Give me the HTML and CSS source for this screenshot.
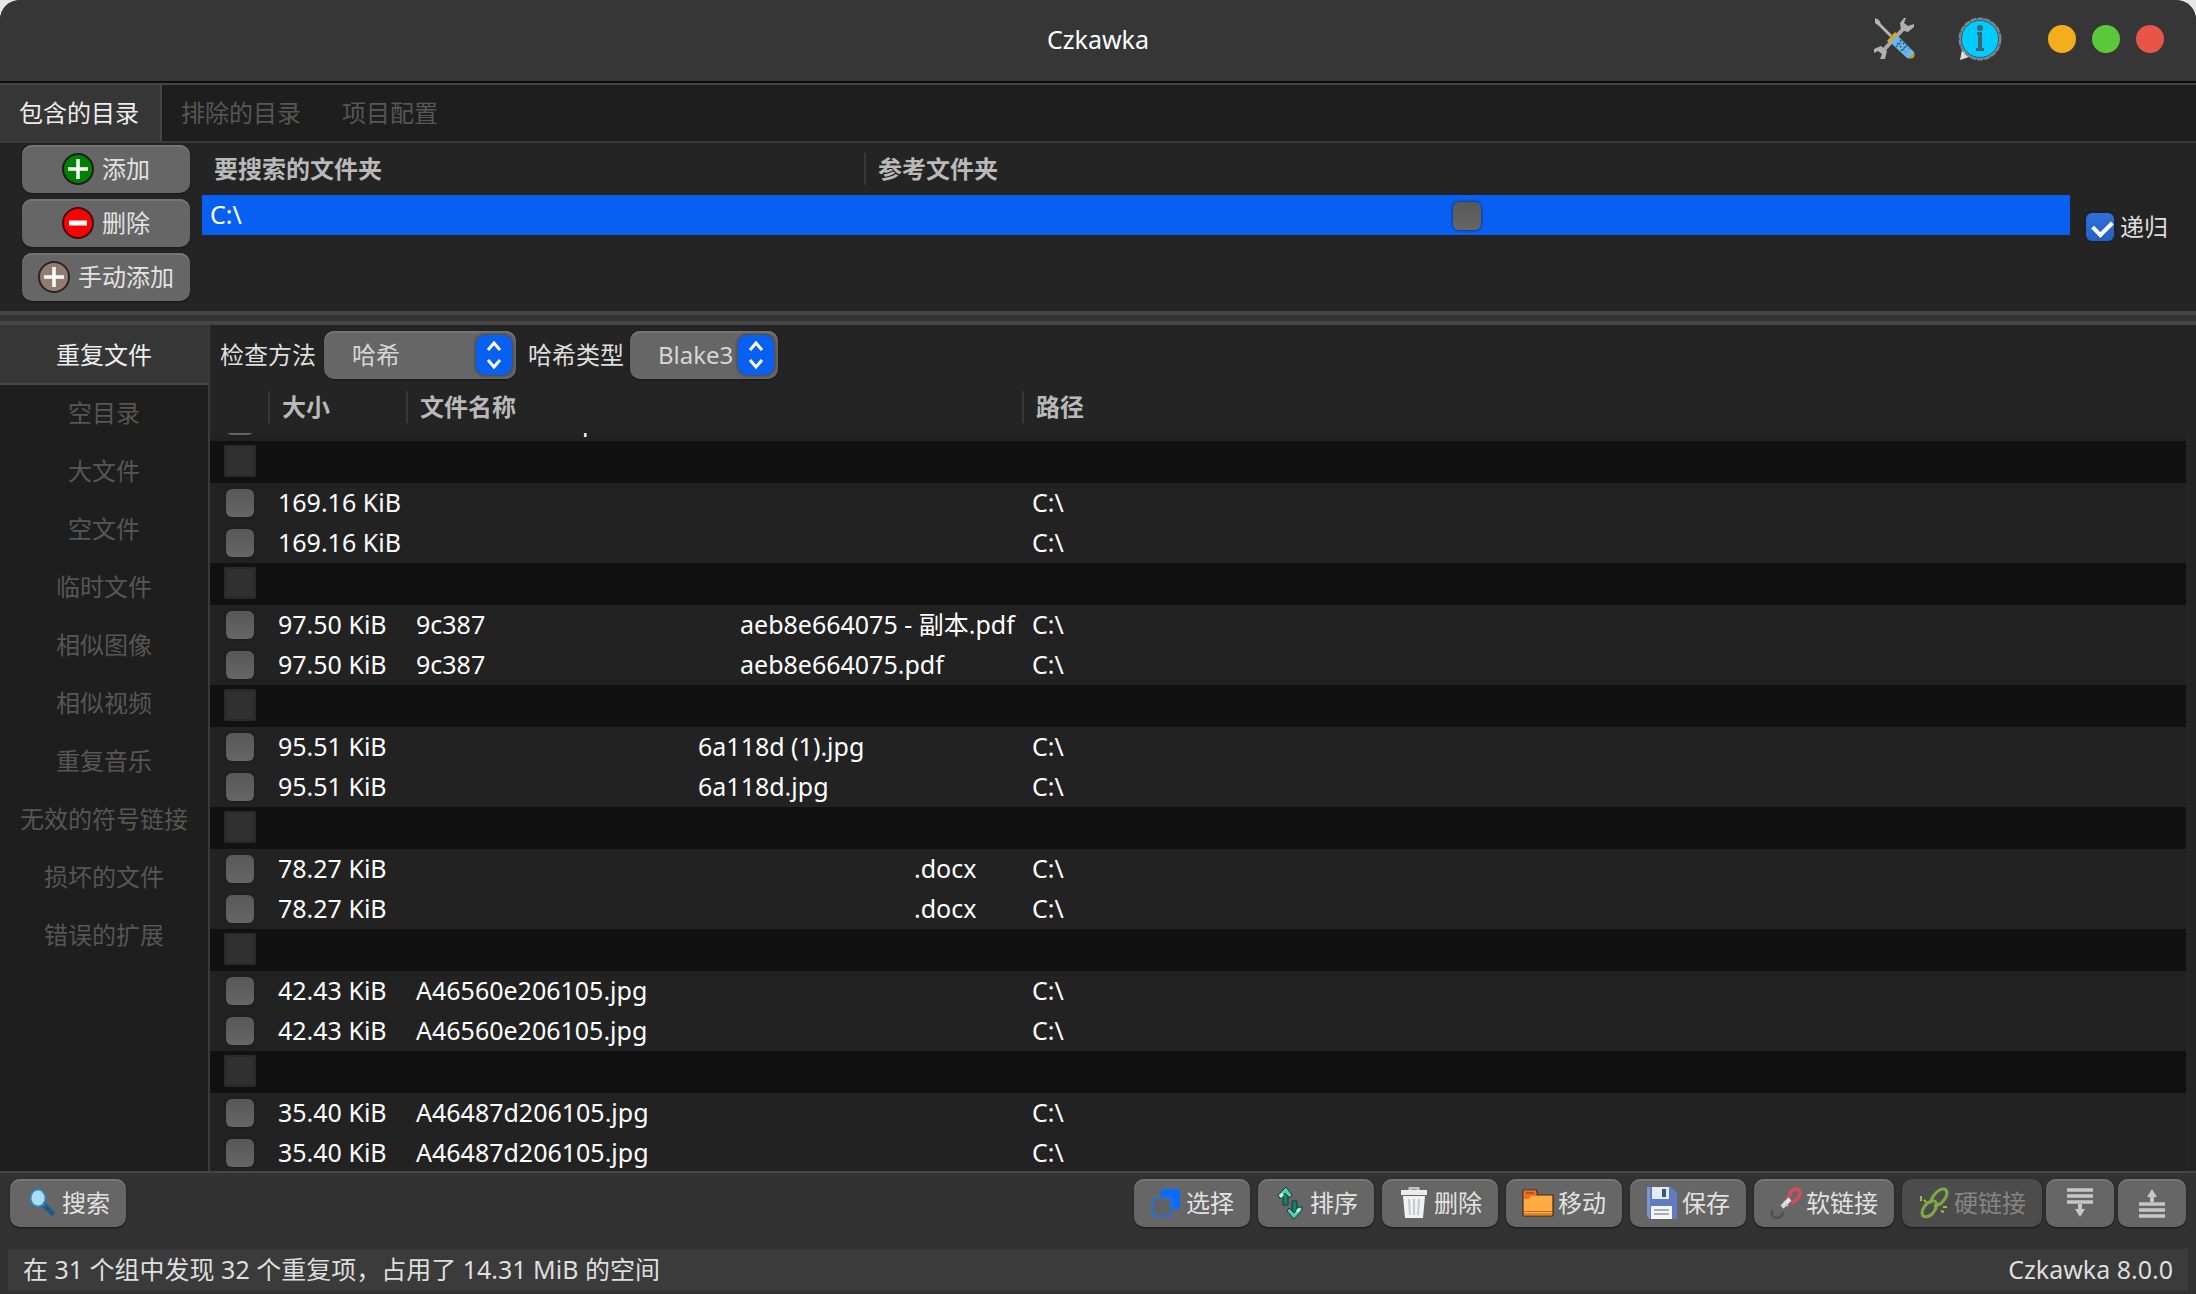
FILE: index.html
```html
<!DOCTYPE html>
<html lang="zh-CN">
<head>
<meta charset="utf-8">
<title>Czkawka</title>
<link rel="stylesheet" href="styles.css">
</head>
<body>
<div class="window">
  <header class="titlebar">
    <h1 class="title latin">Czkawka</h1>
    <div class="title-actions">
      <button class="icon-button" aria-label="设置">
        <svg width="44" height="44" viewBox="0 0 44 44">
          <path d="M9 36 L33 10" stroke="#a9a9a9" stroke-width="4"/>
          <path d="M2 32l7-3 6 5-2 8-5 0 2-5-4-3-4 2z" fill="#b0b0b0"/>
          <path d="M32 1l-4 5 1 7 7 2 6-5v-3l-6 2-4-3 2-5z" fill="#b0b0b0"/>
          <path d="M3 1l4 2 2 4 11 11-2 2L7 9 3 6z" fill="#b5b5b5"/>
          <path d="M15 24l8-9 3 3-8 8z" fill="#e0a818"/>
          <path d="M20 23c2-4 5-5 8-2l14 14c2 3-4 8-7 6L22 29c-2-2-3-4-2-6z" fill="#6db7e6"/>
          <path d="M37 41l5-5c2 3-1 7-5 5z" fill="#c9971c"/>
          <path d="M25 26l9 9M28 23l9 9M24 30l6-6M29 34l6-6" stroke="#245f8c" stroke-width="1.500" stroke-dasharray="2 2"/>
        </svg>
      </button>
      <button class="icon-button" aria-label="关于">
        <svg width="44" height="44" viewBox="0 0 44 44">
          <path d="M4 33l-2 10 12-4z" fill="#dcdce6"/>
          <circle cx="22" cy="22" r="20" fill="#00ccff" stroke="#7d8386" stroke-width="3" stroke-dasharray="6 1"/>
          <circle cx="22" cy="22" r="18.500" fill="none" stroke="#2e5f70" stroke-width="1"/>
          <circle cx="22" cy="11" r="3" fill="#3f6472"/>
          <path d="M19 15h5v16h2v3h-8v-3h2V18h-1z" fill="#3f6472"/>
        </svg>
      </button>
      <div class="window-buttons">
        <button class="dot dot-min" aria-label="最小化"></button>
        <button class="dot dot-max" aria-label="最大化"></button>
        <button class="dot dot-close" aria-label="关闭"></button>
      </div>
    </div>
  </header>

  <nav class="top-tabs">
    <button class="top-tab active">包含的目录</button>
    <button class="top-tab">排除的目录</button>
    <button class="top-tab">项目配置</button>
  </nav>

  <section class="folders">
    <div class="folder-buttons">
      <button class="button wide">
        <svg width="32" height="32" viewBox="0 0 32 32"><circle cx="16" cy="16" r="15" fill="#008000" stroke="#1c1c1c" stroke-width="2"/><path d="M16 6v20M6 16h20" stroke="#fff" stroke-width="3.500"/></svg>
        <span>添加</span>
      </button>
      <button class="button wide">
        <svg width="32" height="32" viewBox="0 0 32 32"><circle cx="16" cy="16" r="15" fill="#f00" stroke="#3a1010" stroke-width="2"/><path d="M7 16h18" stroke="#fff" stroke-width="5"/></svg>
        <span>删除</span>
      </button>
      <button class="button wide">
        <svg width="32" height="32" viewBox="0 0 32 32"><circle cx="16" cy="16" r="15" fill="#917c6f" stroke="#2b2420" stroke-width="2"/><path d="M16 6v20M6 16h20" stroke="#fff" stroke-width="3.500"/></svg>
        <span>手动添加</span>
      </button>
    </div>
    <table class="folder-table">
      <colgroup><col class="col-folder"><col></colgroup>
      <thead><tr><th><span>要搜索的文件夹</span></th><th class="ruled"><span>参考文件夹</span></th></tr></thead>
      <tbody><tr><td class="latin">C:\</td><td class="center"><input type="checkbox" class="check" aria-label="参考文件夹"></td></tr></tbody>
    </table>
    <label class="recursive"><input type="checkbox" class="check" checked><span>递归</span></label>
  </section>

  <div class="splitter"></div>

  <main class="main">
    <nav class="side-tabs">
      <button class="side-tab active">重复文件</button>
      <button class="side-tab">空目录</button>
      <button class="side-tab">大文件</button>
      <button class="side-tab">空文件</button>
      <button class="side-tab">临时文件</button>
      <button class="side-tab">相似图像</button>
      <button class="side-tab">相似视频</button>
      <button class="side-tab">重复音乐</button>
      <button class="side-tab">无效的符号链接</button>
      <button class="side-tab">损坏的文件</button>
      <button class="side-tab">错误的扩展</button>
    </nav>
    <section class="results">
      <div class="options">
        <label for="method">检查方法</label>
        <div class="combo combo-method">
          <select id="method"><option>哈希</option></select>
          <span class="combo-arrow"><svg width="16" height="28" viewBox="0 0 16 28"><path d="M2 9l6-7 6 7M2 19l6 7 6-7" fill="none" stroke="#fff" stroke-width="3"/></svg></span>
        </div>
        <label for="hash-type">哈希类型</label>
        <div class="combo combo-hash">
          <select id="hash-type"><option>Blake3</option></select>
          <span class="combo-arrow"><svg width="16" height="28" viewBox="0 0 16 28"><path d="M2 9l6-7 6 7M2 19l6 7 6-7" fill="none" stroke="#fff" stroke-width="3"/></svg></span>
        </div>
      </div>
      <div class="result-scroll">
        <table class="result-table">
          <colgroup><col class="col-check"><col class="col-size"><col class="col-name"><col></colgroup>
          <thead><tr><th></th><th class="ruled"><span>大小</span></th><th class="ruled"><span>文件名称</span></th><th class="ruled"><span>路径</span></th></tr></thead>
          <tbody>
            <tr class="peek"><td><div class="peek-clip"><input type="checkbox" class="check" aria-label="选择"></div></td><td></td><td><div class="peek-clip"><span class="at-p">p</span></div></td><td></td></tr>
            <tr class="group"><td><input type="checkbox" class="check" disabled aria-label="组"></td><td></td><td></td><td></td></tr>
            <tr><td><input type="checkbox" class="check" aria-label="选择"></td><td>169.16 KiB</td><td></td><td>C:\</td></tr>
            <tr><td><input type="checkbox" class="check" aria-label="选择"></td><td>169.16 KiB</td><td></td><td>C:\</td></tr>
            <tr class="group"><td><input type="checkbox" class="check" disabled aria-label="组"></td><td></td><td></td><td></td></tr>
            <tr><td><input type="checkbox" class="check" aria-label="选择"></td><td>97.50 KiB</td><td><span class="split-name"><span>9c387</span><span>aeb8e664075 - 副本.pdf</span></span></td><td>C:\</td></tr>
            <tr><td><input type="checkbox" class="check" aria-label="选择"></td><td>97.50 KiB</td><td><span class="split-name"><span>9c387</span><span>aeb8e664075.pdf</span></span></td><td>C:\</td></tr>
            <tr class="group"><td><input type="checkbox" class="check" disabled aria-label="组"></td><td></td><td></td><td></td></tr>
            <tr><td><input type="checkbox" class="check" aria-label="选择"></td><td>95.51 KiB</td><td><span class="tail-jpg">6a118d (1).jpg</span></td><td>C:\</td></tr>
            <tr><td><input type="checkbox" class="check" aria-label="选择"></td><td>95.51 KiB</td><td><span class="tail-jpg">6a118d.jpg</span></td><td>C:\</td></tr>
            <tr class="group"><td><input type="checkbox" class="check" disabled aria-label="组"></td><td></td><td></td><td></td></tr>
            <tr><td><input type="checkbox" class="check" aria-label="选择"></td><td>78.27 KiB</td><td><span class="tail-docx">.docx</span></td><td>C:\</td></tr>
            <tr><td><input type="checkbox" class="check" aria-label="选择"></td><td>78.27 KiB</td><td><span class="tail-docx">.docx</span></td><td>C:\</td></tr>
            <tr class="group"><td><input type="checkbox" class="check" disabled aria-label="组"></td><td></td><td></td><td></td></tr>
            <tr><td><input type="checkbox" class="check" aria-label="选择"></td><td>42.43 KiB</td><td>A46560e206105.jpg</td><td>C:\</td></tr>
            <tr><td><input type="checkbox" class="check" aria-label="选择"></td><td>42.43 KiB</td><td>A46560e206105.jpg</td><td>C:\</td></tr>
            <tr class="group"><td><input type="checkbox" class="check" disabled aria-label="组"></td><td></td><td></td><td></td></tr>
            <tr><td><input type="checkbox" class="check" aria-label="选择"></td><td>35.40 KiB</td><td>A46487d206105.jpg</td><td>C:\</td></tr>
            <tr><td><input type="checkbox" class="check" aria-label="选择"></td><td>35.40 KiB</td><td>A46487d206105.jpg</td><td>C:\</td></tr>
          </tbody>
        </table>
      </div>
    </section>
  </main>

  <footer class="bottom">
    <div class="actions">
      <button class="button">
        <svg width="32" height="32" viewBox="0 0 32 32"><path d="M17 17l9 9" stroke="#1c5a8a" stroke-width="5" stroke-linecap="round"/><path d="M14 15l5 4" stroke="#2b79b5" stroke-width="3"/><ellipse cx="12" cy="11" rx="8" ry="9" fill="#2f8fd0"/><ellipse cx="12" cy="11" rx="6.500" ry="7.500" fill="#a9defa"/></svg>
        <span>搜索</span>
      </button>
      <div class="action-group">
        <button class="button">
          <svg width="32" height="32" viewBox="0 0 32 32"><rect x="11" y="2" width="19" height="20" rx="2" fill="#0a6cff"/><rect x="3" y="11" width="18" height="18" rx="3" fill="#626262" stroke="#2e6fc4" stroke-width="2.500"/></svg>
          <span>选择</span>
        </button>
        <button class="button">
          <svg width="32" height="32" viewBox="0 0 32 32"><path d="M9 6h5v12H9z" fill="#1d7d6c" stroke="#123c36"/><path d="M18 14h5v12h-5z" fill="#1d7d6c" stroke="#123c36"/><path d="M4 8l8-8 6 8-2 3-5-5-5 6z" fill="#4fd0b4" stroke="#123c36"/><path d="M28 23l-8 9-7-8 2-3 5 5 5-6 3 0z" fill="#4fd0b4" stroke="#123c36"/><path d="M5 8l3-2 2 2-3 3zM27 22l-3-1-2 3 2 2z" fill="#b5f3e2"/></svg>
          <span>排序</span>
        </button>
        <button class="button">
          <svg width="32" height="32" viewBox="0 0 32 32"><path d="M12 3V1h8v2" fill="none" stroke="#c4c4c4" stroke-width="3"/><path d="M3 3h26v5H3z" fill="#ececec"/><path d="M5 9h22l-2 22H7z" fill="#f2f2f2"/><path d="M11 12l1 16M16 12v16M21 12l-1 16" stroke="#c6c9cb" stroke-width="2"/></svg>
          <span>删除</span>
        </button>
        <button class="button">
          <svg width="32" height="32" viewBox="0 0 32 32"><path d="M1 12V4q0-1 1-1h11q2 0 2 2v3h16v20q0 1-1 1H2q-1 0-1-1z" fill="#ffad42" stroke="#402a14" stroke-width="1.200"/><path d="M2 4h12v5H9l-2 3H2z" fill="#f07023"/><path d="M4 6h8" stroke="#b34712" stroke-width="1.500"/><path d="M2 24h28v1H2z" fill="#c96a1c"/><path d="M2 26h28v2H2z" fill="#e8822a"/></svg>
          <span>移动</span>
        </button>
        <button class="button">
          <svg width="32" height="32" viewBox="0 0 32 32"><path d="M1 0h24l6 6v26H3l-2-3z" fill="#5f7cc0"/><path d="M1 0h3v32l-3-3z" fill="#7d95d0"/><rect x="6" y="0" width="17" height="12" fill="#e3ebf4"/><rect x="16" y="2" width="4" height="8" fill="#38557f"/><rect x="5" y="19" width="21" height="13" fill="#f6f6f6"/><path d="M8 23h15M8 27h15" stroke="#a5adba" stroke-width="2"/></svg>
          <span>保存</span>
        </button>
        <button class="button">
          <svg width="32" height="32" viewBox="0 0 32 32"><path d="M17 13l4-8c2-4 10-4 9 2-1 4-5 8-9 9" fill="none" stroke="#d84a5c" stroke-width="3.500"/><path d="M12 20l8-8" stroke="#e8eaf0" stroke-width="4"/><path d="M14 14l4 5M11 18l5 1" stroke="#c9cdd6" stroke-width="1.500"/><path d="M2 23c-1 5 1 8 5 8 3 0 6-3 6-6" fill="none" stroke="#46525a" stroke-width="2.500"/></svg>
          <span>软链接</span>
        </button>
        <button class="button" disabled>
          <svg width="32" height="32" viewBox="0 0 32 32"><g fill="none" stroke="#7da843" stroke-width="3"><path d="M14 16c-3-4 6-14 11-14s5 6 1 11c-3 4-7 6-10 5"/><path d="M16 14c5 1 2 8-1 12-4 5-11 5-11 0 0-4 4-10 9-12 1 0 2-1 3 0"/></g><path d="M3 9v5M6 13l2 2M25 20h4M23 24l3 1" stroke="#a6bb3a" stroke-width="2"/></svg>
          <span>硬链接</span>
        </button>
        <div class="toggles">
          <button class="button" aria-label="隐藏底部"><svg width="32" height="32" viewBox="0 0 32 32"><path d="M3 3h26M3 9h26M3 15h26" stroke="#c6c6c6" stroke-width="3.500"/><path d="M16 17v5" stroke="#c6c6c6" stroke-width="4"/><path d="M11 22h10l-5 8z" fill="#c6c6c6"/></svg></button>
          <button class="button" aria-label="隐藏顶部"><svg width="32" height="32" viewBox="0 0 32 32"><path d="M3 17h26M3 23h26M3 29h26" stroke="#c6c6c6" stroke-width="3.500"/><path d="M16 9v6" stroke="#c6c6c6" stroke-width="4"/><path d="M11 10h10l-5-8z" fill="#c6c6c6"/></svg></button>
        </div>
      </div>
    </div>
    <div class="status latin"><span>在 31 个组中发现 32 个重复项，占用了 14.31 MiB 的空间</span><span>Czkawka 8.0.0</span></div>
  </footer>
</div>
</body>
</html>
```
FILE: styles.css
```css
* { box-sizing: border-box; }

body {
  margin: 0;
  background: #e6e6e6;
  color: #dedede;
  font-family: "Noto Sans", "Noto Sans CJK SC", sans-serif;
  font-size: 24px;
  line-height: 32px;
}

button, select, input { font: inherit; color: inherit; }
button { border: 0; padding: 0; background: none; white-space: nowrap; }
svg { display: block; flex: none; }
.latin { font-size: 25px; }

.window {
  display: flex;
  flex-direction: column;
  height: 100vh;
  background: #323232;
  border-radius: 20px 20px 0 0;
  overflow: hidden;
}

/* Title bar */
.titlebar {
  display: grid;
  grid-template-columns: 1fr auto 1fr;
  align-items: center;
  height: 85px;
  padding: 0 32px 6px;
  background: #363636;
  border-bottom: 2px solid #454545;
  box-shadow: inset 0 -2px #0c0c0c;
}
.title { grid-column: 2; margin: 0; font-weight: 400; color: #fff; }
.title-actions { display: flex; align-items: center; justify-content: flex-end; gap: 42px; }
.window-buttons { display: flex; gap: 16px; margin-left: 4px; }
.dot { width: 28px; height: 28px; border-radius: 50%; }
.dot-min { background: #f2ae1c; }
.dot-max { background: #5ac83a; }
.dot-close { background: #e95449; }

/* Top notebook */
.top-tabs { display: flex; height: 58px; background: #1e1e1e; border-bottom: 2px solid #3a3a3a; }
.top-tab { padding: 0 22px 0 19px; color: #565656; }
.top-tab.active { background: #363636; color: #eee; border-right: 2px solid #454545; padding-right: 21px; }

.folders { display: flex; align-items: center; gap: 12px; padding: 2px 28px 10px 22px; background: #242424; }
.folder-buttons { display: flex; flex-direction: column; gap: 6px; width: 168px; }
.folder-table { flex: 1; align-self: flex-start; margin-top: -2px; }
.recursive { display: flex; align-items: center; gap: 6px; margin-left: 4px; padding-top: 8px; }

table { border-collapse: collapse; table-layout: fixed; width: 100%; color: #fff; }
th, td { padding: 0; text-align: left; font-weight: 400; }
th { color: #b9b9b9; font-weight: 700; }
th span { display: block; padding: 0 12px; }
.ruled span { border-left: 2px solid #383838; }
.folder-table th { height: 52px; }
.folder-table td { height: 40px; padding: 0 0 2px 8px; background: #0860f2; }
.folder-table td.center { text-align: center; padding: 0 0 2px; }
.col-folder { width: 662px; }

.check {
  appearance: none;
  display: inline-block;
  vertical-align: middle;
  width: 28px;
  height: 28px;
  margin: 0;
  border-radius: 6px;
  background: linear-gradient(#585858, #666);
  box-shadow: 0 0 2px 1px #1c1c1c80;
}
.check:checked {
  position: relative;
  background: linear-gradient(#2e70dc, #2460c2);
}
.check:checked::after {
  content: "";
  position: absolute;
  left: 7px;
  top: 7px;
  width: 15px;
  height: 9px;
  border: solid #fff;
  border-width: 0 0 4px 4px;
  transform: rotate(-45deg);
}
.check:disabled { width: 32px; height: 32px; border-radius: 2px; background: #303030; box-shadow: inset 0 0 0 2px #292929; }

/* Buttons */
.button {
  display: flex;
  align-items: center;
  justify-content: center;
  gap: 4px;
  height: 48px;
  padding: 0 16px;
  border-radius: 10px;
  background: #666;
  color: #e2e2e2;
  box-shadow: inset 0 2px #747474, 0 1px 2px #181818;
}
.button.wide { gap: 8px; }
.button:disabled { background: #4c4c4c; color: #858585; box-shadow: 0 1px 2px #181818; }

.splitter { flex: none; height: 14px; background: #333; border: solid #454545; border-width: 4px 0; }

/* Main area */
.main { flex: 1; display: flex; min-height: 0; background: #242424; }
.side-tabs { flex: none; display: flex; flex-direction: column; width: 210px; background: #1e1e1e; border-right: 2px solid #3a3a3a; }
.side-tab { height: 58px; padding-bottom: 2px; color: #565656; }
.side-tab.active { height: 60px; padding: 2px 0 0; background: #363636; color: #eee; border-bottom: 2px solid #454545; }

.results { flex: 1; display: flex; flex-direction: column; min-width: 0; }
.options { display: flex; align-items: center; height: 60px; padding: 6px 10px; }
.options label { margin-right: 8px; }
.combo { position: relative; margin-right: 12px; }
.combo + label { margin-right: 6px; }
.combo-method { width: 192px; }
.combo-hash { width: 148px; }
.combo select {
  appearance: none;
  width: 100%;
  height: 48px;
  padding: 0 0 0 28px;
  border: 0;
  border-radius: 10px;
  background: #666;
  color: #d6d6d6;
  box-shadow: inset 0 2px #747474, 0 1px 2px #181818;
}
.combo-arrow {
  position: absolute;
  right: 4px;
  top: 4px;
  display: flex;
  align-items: center;
  justify-content: center;
  width: 36px;
  height: 40px;
  border-radius: 9px;
  background: #0860f2;
  box-shadow: 0 0 3px 1px #444;
  pointer-events: none;
}

.result-scroll { flex: 1; min-height: 0; overflow: hidden; padding-right: 10px; }
.result-table th { height: 48px; padding-bottom: 4px; }
.col-check { width: 58px; }
.col-size { width: 138px; }
.col-name { width: 616px; }
.result-table td { height: 40px; padding: 0 0 2px 10px; background: #222; white-space: pre; font-size: 25px; }
.result-table td:first-child { padding: 0 0 0 16px; line-height: 0; }
.result-table .group td { height: 42px; background: #111; }
.result-table .group td:first-child { padding: 0 0 2px 14px; }
.result-table .peek td { height: 8px; padding-bottom: 0; vertical-align: top; }
.peek-clip { display: flex; align-items: flex-end; height: 8px; padding-bottom: 6px; overflow: hidden; line-height: 32px; }
.result-table .peek td:nth-child(3) .peek-clip { padding-bottom: 4px; }
.at-p { padding-left: 166px; }
.split-name { display: grid; grid-template-columns: 324px auto; }
.tail-jpg { padding-left: 282px; }
.tail-docx { padding-left: 498px; }

/* Bottom */
.bottom { border-top: 2px solid #454545; padding: 6px 8px 3px; }
.actions, .action-group, .toggles { display: flex; }
.actions { justify-content: space-between; padding: 0 2px 22px; }
.action-group { gap: 8px; }
.toggles { gap: 4px; margin-left: -4px; }
.toggles .button { padding: 0 18px; }
.status { display: flex; justify-content: space-between; align-items: center; height: 42px; padding: 0 15px 2px; background: #3b3b3b; }
```
